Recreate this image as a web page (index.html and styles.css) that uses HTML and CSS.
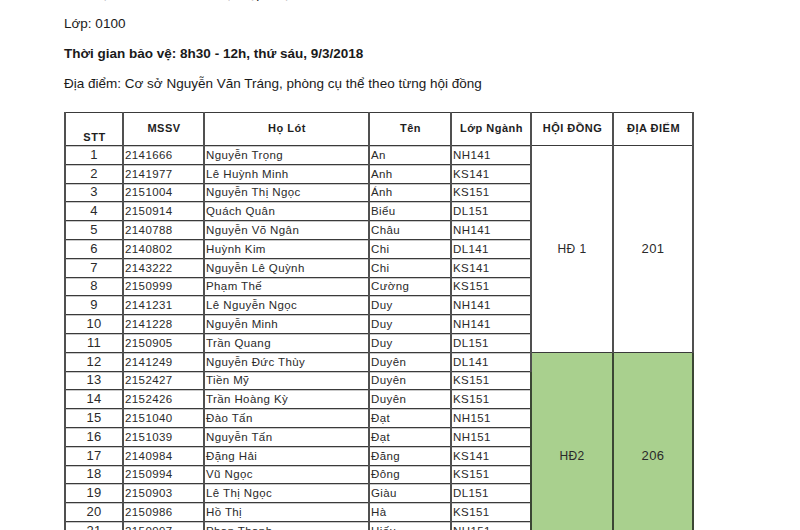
FILE: index.html
```html
<!DOCTYPE html>
<html lang="vi">
<head>
<meta charset="utf-8">
<title>Danh sách hội đồng</title>
<link rel="stylesheet" href="styles.css">
</head>
<body>
<div class="page">
  <div class="info">
    <p>Môn học: DCS22-2 T2 - Thực tập nhận thức</p>
    <p>Lớp: 0100</p>
    <p class="strong">Thời gian bảo vệ: 8h30 - 12h, thứ sáu, 9/3/2018</p>
    <p>Địa điểm: Cơ sở Nguyễn Văn Tráng, phòng cụ thể theo từng hội đồng</p>
  </div>
  <table class="list">
    <colgroup>
      <col class="c-stt"><col class="c-mssv"><col class="c-ho"><col class="c-ten"><col class="c-lop"><col class="c-hd"><col class="c-dd">
    </colgroup>
    <thead>
      <tr class="head">
        <th class="stt-h">STT</th><th>MSSV</th><th>Họ Lót</th><th>Tên</th><th>Lớp Ngành</th><th class="caps">HỘI ĐỒNG</th><th class="caps">ĐỊA ĐIỂM</th>
      </tr>
    </thead>
    <tbody>
      <tr><td class="n">1</td><td>2141666</td><td>Nguyễn Trọng</td><td>An</td><td>NH141</td><td class="grp" rowspan="11">HĐ 1</td><td class="grp room" rowspan="11">201</td></tr>
      <tr><td class="n">2</td><td>2141977</td><td>Lê Huỳnh Minh</td><td>Anh</td><td>KS141</td></tr>
      <tr><td class="n">3</td><td>2151004</td><td>Nguyễn Thị Ngọc</td><td>Ánh</td><td>KS151</td></tr>
      <tr><td class="n">4</td><td>2150914</td><td>Quách Quân</td><td>Biểu</td><td>DL151</td></tr>
      <tr><td class="n">5</td><td>2140788</td><td>Nguyễn Võ Ngân</td><td>Châu</td><td>NH141</td></tr>
      <tr><td class="n">6</td><td>2140802</td><td>Huỳnh Kim</td><td>Chi</td><td>DL141</td></tr>
      <tr><td class="n">7</td><td>2143222</td><td>Nguyễn Lê Quỳnh</td><td>Chi</td><td>KS141</td></tr>
      <tr><td class="n">8</td><td>2150999</td><td>Phạm Thế</td><td>Cường</td><td>KS151</td></tr>
      <tr><td class="n">9</td><td>2141231</td><td>Lê Nguyễn Ngọc</td><td>Duy</td><td>NH141</td></tr>
      <tr><td class="n">10</td><td>2141228</td><td>Nguyễn Minh</td><td>Duy</td><td>NH141</td></tr>
      <tr><td class="n">11</td><td>2150905</td><td>Trần Quang</td><td>Duy</td><td>DL151</td></tr>
      <tr><td class="n">12</td><td>2141249</td><td>Nguyễn Đức Thùy</td><td>Duyên</td><td>DL141</td><td class="grp green" rowspan="11">HĐ2</td><td class="grp green room" rowspan="11">206</td></tr>
      <tr><td class="n">13</td><td>2152427</td><td>Tiền Mỹ</td><td>Duyên</td><td>KS151</td></tr>
      <tr><td class="n">14</td><td>2152426</td><td>Trần Hoàng Kỳ</td><td>Duyên</td><td>KS151</td></tr>
      <tr><td class="n">15</td><td>2151040</td><td>Đào Tấn</td><td>Đạt</td><td>NH151</td></tr>
      <tr><td class="n">16</td><td>2151039</td><td>Nguyễn Tấn</td><td>Đạt</td><td>NH151</td></tr>
      <tr><td class="n">17</td><td>2140984</td><td>Đặng Hải</td><td>Đăng</td><td>KS141</td></tr>
      <tr><td class="n">18</td><td>2150994</td><td>Vũ Ngọc</td><td>Đông</td><td>KS151</td></tr>
      <tr><td class="n">19</td><td>2150903</td><td>Lê Thị Ngọc</td><td>Giàu</td><td>DL151</td></tr>
      <tr><td class="n">20</td><td>2150986</td><td>Hồ Thị</td><td>Hà</td><td>KS151</td></tr>
      <tr><td class="n">21</td><td>2150997</td><td>Phan Thanh</td><td>Hiếu</td><td>NH151</td></tr>
      <tr><td class="n">22</td><td>2150911</td><td>Nguyễn Trung</td><td>Hiếu</td><td>NH151</td></tr>
    </tbody>
  </table>
</div>
</body>
</html>
```
FILE: styles.css
```css
html, body {
  margin: 0;
  padding: 0;
  background: #ffffff;
  height: 530px;
  overflow: hidden;
}
body {
  font-family: "Liberation Sans", Arial, sans-serif;
  color: #1e1e1e;
}
.page {
  padding-left: 64px;
  margin-top: -21px;
}
.info p {
  margin: 0;
  height: 30px;
  line-height: 30px;
  font-size: 13.5px;
  letter-spacing: 0;
  color: #1a1a1a;
}
.info .strong {
  font-weight: bold;
}
.list {
  margin-top: 13px;
  border-collapse: collapse;
  table-layout: fixed;
  width: 628px;
}
.c-stt { width: 58px; }
.c-mssv { width: 81px; }
.c-ho { width: 165px; }
.c-ten { width: 82px; }
.c-lop { width: 80px; }
.c-hd { width: 82px; }
.c-dd { width: 80px; }
.list th, .list td {
  border-left: 2px solid #505050;
  border-right: 2px solid #505050;
  border-top: 1px solid #3a3a3a;
  border-bottom: 1px solid #3a3a3a;
  padding: 0 0 0 1px;
  white-space: nowrap;
  overflow: hidden;
}
.head {
  height: 33px;
}
.list th {
  font-size: 11px;
  font-weight: bold;
  letter-spacing: 0.5px;
  text-align: center;
  vertical-align: middle;
  padding-bottom: 3px;
}
.list th.stt-h {
  vertical-align: bottom;
  padding-bottom: 2px;
}
.list tbody tr {
  height: 18.8px;
}
.list td {
  font-size: 11.5px;
  letter-spacing: 0.4px;
  line-height: 14px;
  vertical-align: middle;
  color: #2a2a2a;
  box-shadow: inset 0 1px 0 #c9c9c9;
}
.list td.n {
  text-align: center;
  font-size: 13px;
  letter-spacing: 0.3px;
  padding: 0;
}
.list td.grp {
  text-align: center;
  font-size: 12px;
  letter-spacing: 0.4px;
  box-shadow: none;
  padding: 0;
}
.list td.room {
  font-size: 13px;
}
.list td.green {
  background: #a9d08e;
  border-color: #3b4634;
}
```
